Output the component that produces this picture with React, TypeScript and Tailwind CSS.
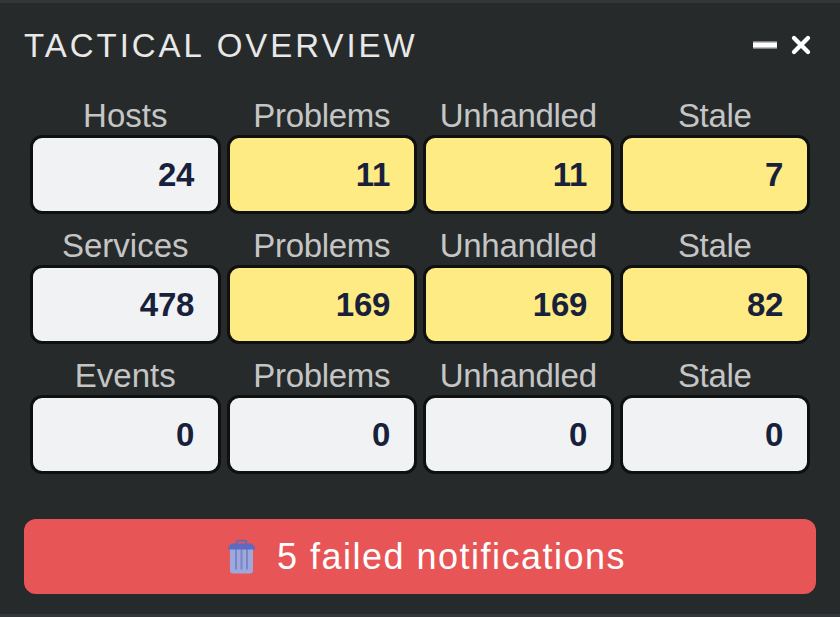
type Cell = { label: string; value: number; warn?: boolean };

const rows: Cell[][] = [
  [
    { label: "Hosts", value: 24 },
    { label: "Problems", value: 11, warn: true },
    { label: "Unhandled", value: 11, warn: true },
    { label: "Stale", value: 7, warn: true },
  ],
  [
    { label: "Services", value: 478 },
    { label: "Problems", value: 169, warn: true },
    { label: "Unhandled", value: 169, warn: true },
    { label: "Stale", value: 82, warn: true },
  ],
  [
    { label: "Events", value: 0 },
    { label: "Problems", value: 0 },
    { label: "Unhandled", value: 0 },
    { label: "Stale", value: 0 },
  ],
];

function Stat({ label, value, warn, column }: Cell & { column: number }) {
  return (
    <div className="flex h-[130px] flex-col">
      <div
        className={`h-[51px] pt-[12px] text-center text-[33px] leading-[39px] text-[#c5c5c5] ${
          column === 0 ? "tracking-normal" : "tracking-[-0.3px]"
        }`}
      >
        {label}
      </div>
      <div
        className={`flex h-[79px] items-center justify-end rounded-[12px] border-[3px] border-[#0f1111] text-[33px] font-bold leading-[39px] tracking-[-0.3px] text-[#18213b] ${
          column % 2 === 0 ? "pr-[23.5px]" : "pr-[24px]"
        } ${warn ? "bg-[#ffeb84]" : "bg-[#f1f2f4]"}`}
      >
        {value}
      </div>
    </div>
  );
}

function TrashIcon() {
  return (
    <svg width="28" height="36" viewBox="0 0 28 36" className="shrink-0">
      <path d="M2 9H25V31.5Q25 34.5 22 34.5H5Q2 34.5 2 31.5Z" fill="#9fa8da" />
      <path d="M8 10V30.5M13.5 10V30.5M19 10V30.5" stroke="#7986cb" strokeWidth="2" />
      <path d="M8.7 5V3.2Q8.7 1.7 10.2 1.7H17Q18.5 1.7 18.5 3.2V5" fill="none" stroke="#5c6bc0" strokeWidth="1.8" />
      <path d="M3.6 4.4H23.4Q25 4.4 25.2 7H26Q27 7 27 8V10.6H0.3V8Q0.3 7 1.3 7H2Q2.2 4.4 3.6 4.4Z" fill="#5c6bc0" />
    </svg>
  );
}

export default function App() {
  return (
    <div className="flex h-[617px] w-[840px] flex-col border-y-[3px] border-[#323639] bg-[#262a2b] px-[24px] font-['Liberation_Sans',Arial,sans-serif]">
      <header className="flex h-[81px] items-center justify-between pt-[3px]">
        <h1 className="text-[33px] leading-[39px] tracking-[2.98px] text-[#e8e8e8] [word-spacing:0.8px]">TACTICAL OVERVIEW</h1>
        <div className="flex items-center gap-[12px] pr-[3px]">
          <svg width="24" height="20" viewBox="0 0 24 20">
            <rect y="6" width="24" height="8" fill="#7d8080" />
            <rect y="7" width="24" height="6" fill="#bdbebe" />
            <rect y="8" width="24" height="4" fill="#fff" />
          </svg>
          <svg width="24" height="24" viewBox="0 0 24 24">
            <path d="M5 5L19 19M19 5L5 19" stroke="#fff" strokeWidth="4.3" strokeLinecap="round" />
          </svg>
        </div>
      </header>
      <main className="grid grid-cols-4 gap-x-[6px] px-[6px]">
        {rows.map((row, r) => row.map((cell, c) => <Stat key={`${r}-${c}`} column={c} {...cell} />))}
      </main>
      <div className="mt-[45px] flex h-[75px] items-center justify-center gap-[21px] rounded-[12px] bg-[#e85556] pl-[14px] text-[36px] leading-[42px] tracking-[1.5px] text-white">
        <TrashIcon />
        <span>5 failed notifications</span>
      </div>
    </div>
  );
}
